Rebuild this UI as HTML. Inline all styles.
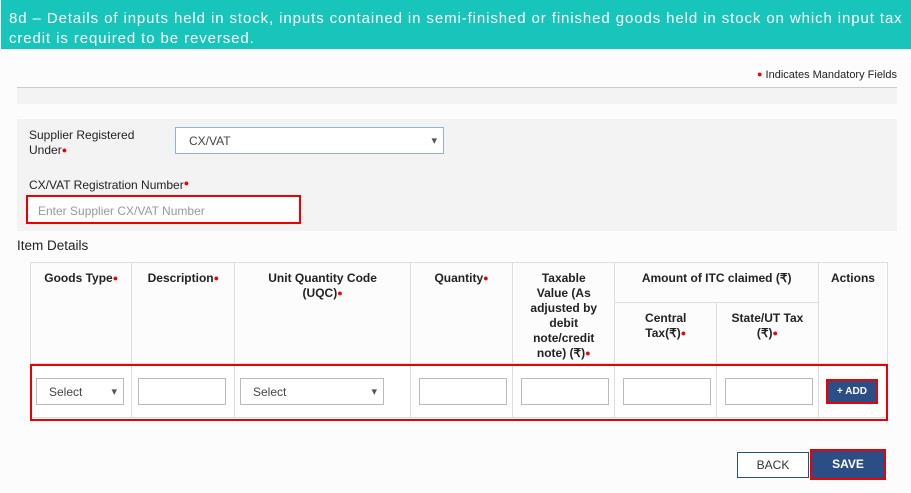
<!DOCTYPE html>
<html><head><meta charset="utf-8"><style>
body{margin:0;width:911px;height:493px;background:#fbfcfb;font-family:"Liberation Sans",sans-serif;position:relative;overflow:hidden;color:#222}
.a{position:absolute}
.hdr{left:1px;top:0;width:910px;height:49px;background:#17c5bb;color:#fff;font-size:15px;line-height:20px;padding:9px 0 0 8px;box-sizing:border-box;letter-spacing:0.9px;white-space:nowrap}
.d{color:#e00;font-size:9px;vertical-align:top}
.sel{background:#fff;border:1px solid #bbb;box-sizing:border-box;font-size:12px;color:#444;padding-left:12px;line-height:26px}
.sel:after{content:"▾";position:absolute;right:6px;top:0;font-size:11px;color:#555}
.inp{background:#fff;border:1px solid #bbb;box-sizing:border-box}
th{font-size:12px;font-weight:bold;color:#222;vertical-align:top;padding-top:8px;border:1px solid #ddd;line-height:15px}
td{border:1px solid #ddd}
table{border-collapse:collapse}
</style></head><body>
<div class="a hdr">8d – Details of inputs held in stock, inputs contained in semi-finished or finished goods held in stock on which input tax<br>credit is required to be reversed.</div>
<div class="a" style="right:14px;top:69px;font-size:11px"><span class="d">●</span> Indicates Mandatory Fields</div>
<div class="a" style="left:17px;top:87px;width:880px;height:1px;background:#ccc"></div>
<div class="a" style="left:17px;top:88px;width:880px;height:16px;background:#f2f3f2"></div>
<div class="a" style="left:17px;top:119px;width:880px;height:112px;background:#f2f3f2"></div>
<div class="a" style="left:29px;top:128px;font-size:12px;line-height:15px">Supplier Registered<br>Under<span class="d">●</span></div>
<div class="a sel" style="left:175px;top:127px;width:269px;height:27px;border-color:#8ab4e0;padding-left:13px">CX/VAT</div>
<div class="a" style="left:29px;top:178px;font-size:12px">CX/VAT Registration Number<span class="d">●</span></div>
<div class="a" style="left:26px;top:195px;width:275px;height:29px;border:2px solid #e00;box-sizing:border-box;background:#fff;font-size:12px;color:#999;padding:7px 0 0 10px">Enter Supplier CX/VAT Number</div>
<div class="a" style="left:17px;top:238px;font-size:13.5px">Item Details</div>
<table class="a" style="left:30px;top:262px;width:858px;background:#fbfcfb">
<tr style="height:40px"><th rowspan="2" style="width:101px">Goods Type<span class="d">●</span></th><th rowspan="2" style="width:101px">Description<span class="d">●</span></th><th rowspan="2" style="width:178px">Unit Quantity Code<br>(UQC)<span class="d">●</span></th><th rowspan="2" style="width:101px">Quantity<span class="d">●</span></th><th rowspan="2" style="width:101px">Taxable<br>Value (As<br>adjusted by<br>debit<br>note/credit<br>note) (₹)<span class="d">●</span></th><th colspan="2">Amount of ITC claimed (₹)</th><th rowspan="2" style="width:67px">Actions</th></tr>
<tr style="height:61px"><th style="width:101px">Central<br>Tax(₹)<span class="d">●</span></th><th style="width:101px">State/UT Tax<br>(₹)<span class="d">●</span></th></tr>
<tr style="height:54px;background:#fff"><td></td><td></td><td></td><td></td><td></td><td></td><td></td><td></td></tr>
</table>
<div class="a" style="left:30px;top:364px;width:858px;height:57px;border:2px solid #e00;box-sizing:border-box"></div>
<div class="a sel" style="left:36px;top:378px;width:88px;height:27px">Select</div>
<div class="a inp" style="left:138px;top:378px;width:88px;height:27px"></div>
<div class="a sel" style="left:240px;top:378px;width:144px;height:27px">Select</div>
<div class="a inp" style="left:419px;top:378px;width:88px;height:27px"></div>
<div class="a inp" style="left:521px;top:378px;width:88px;height:27px"></div>
<div class="a inp" style="left:623px;top:378px;width:88px;height:27px"></div>
<div class="a inp" style="left:725px;top:378px;width:88px;height:27px"></div>
<div class="a" style="left:826px;top:379px;width:52px;height:25px;border:2px solid #e00;box-sizing:border-box;background:#2c4e86;color:#fff;font-size:10px;font-weight:bold;text-align:center;line-height:21px">+ ADD</div>
<div class="a" style="left:737px;top:452px;width:72px;height:26px;border:1px solid #2c4e86;box-sizing:border-box;background:#fff;font-size:12px;text-align:center;line-height:24px;color:#333">BACK</div>
<div class="a" style="left:810px;top:449px;width:76px;height:31px;border:2px solid #e00;box-sizing:border-box;background:#2c4e86;color:#fff;font-size:12px;font-weight:bold;text-align:center;line-height:27px">SAVE</div>
</body></html>
